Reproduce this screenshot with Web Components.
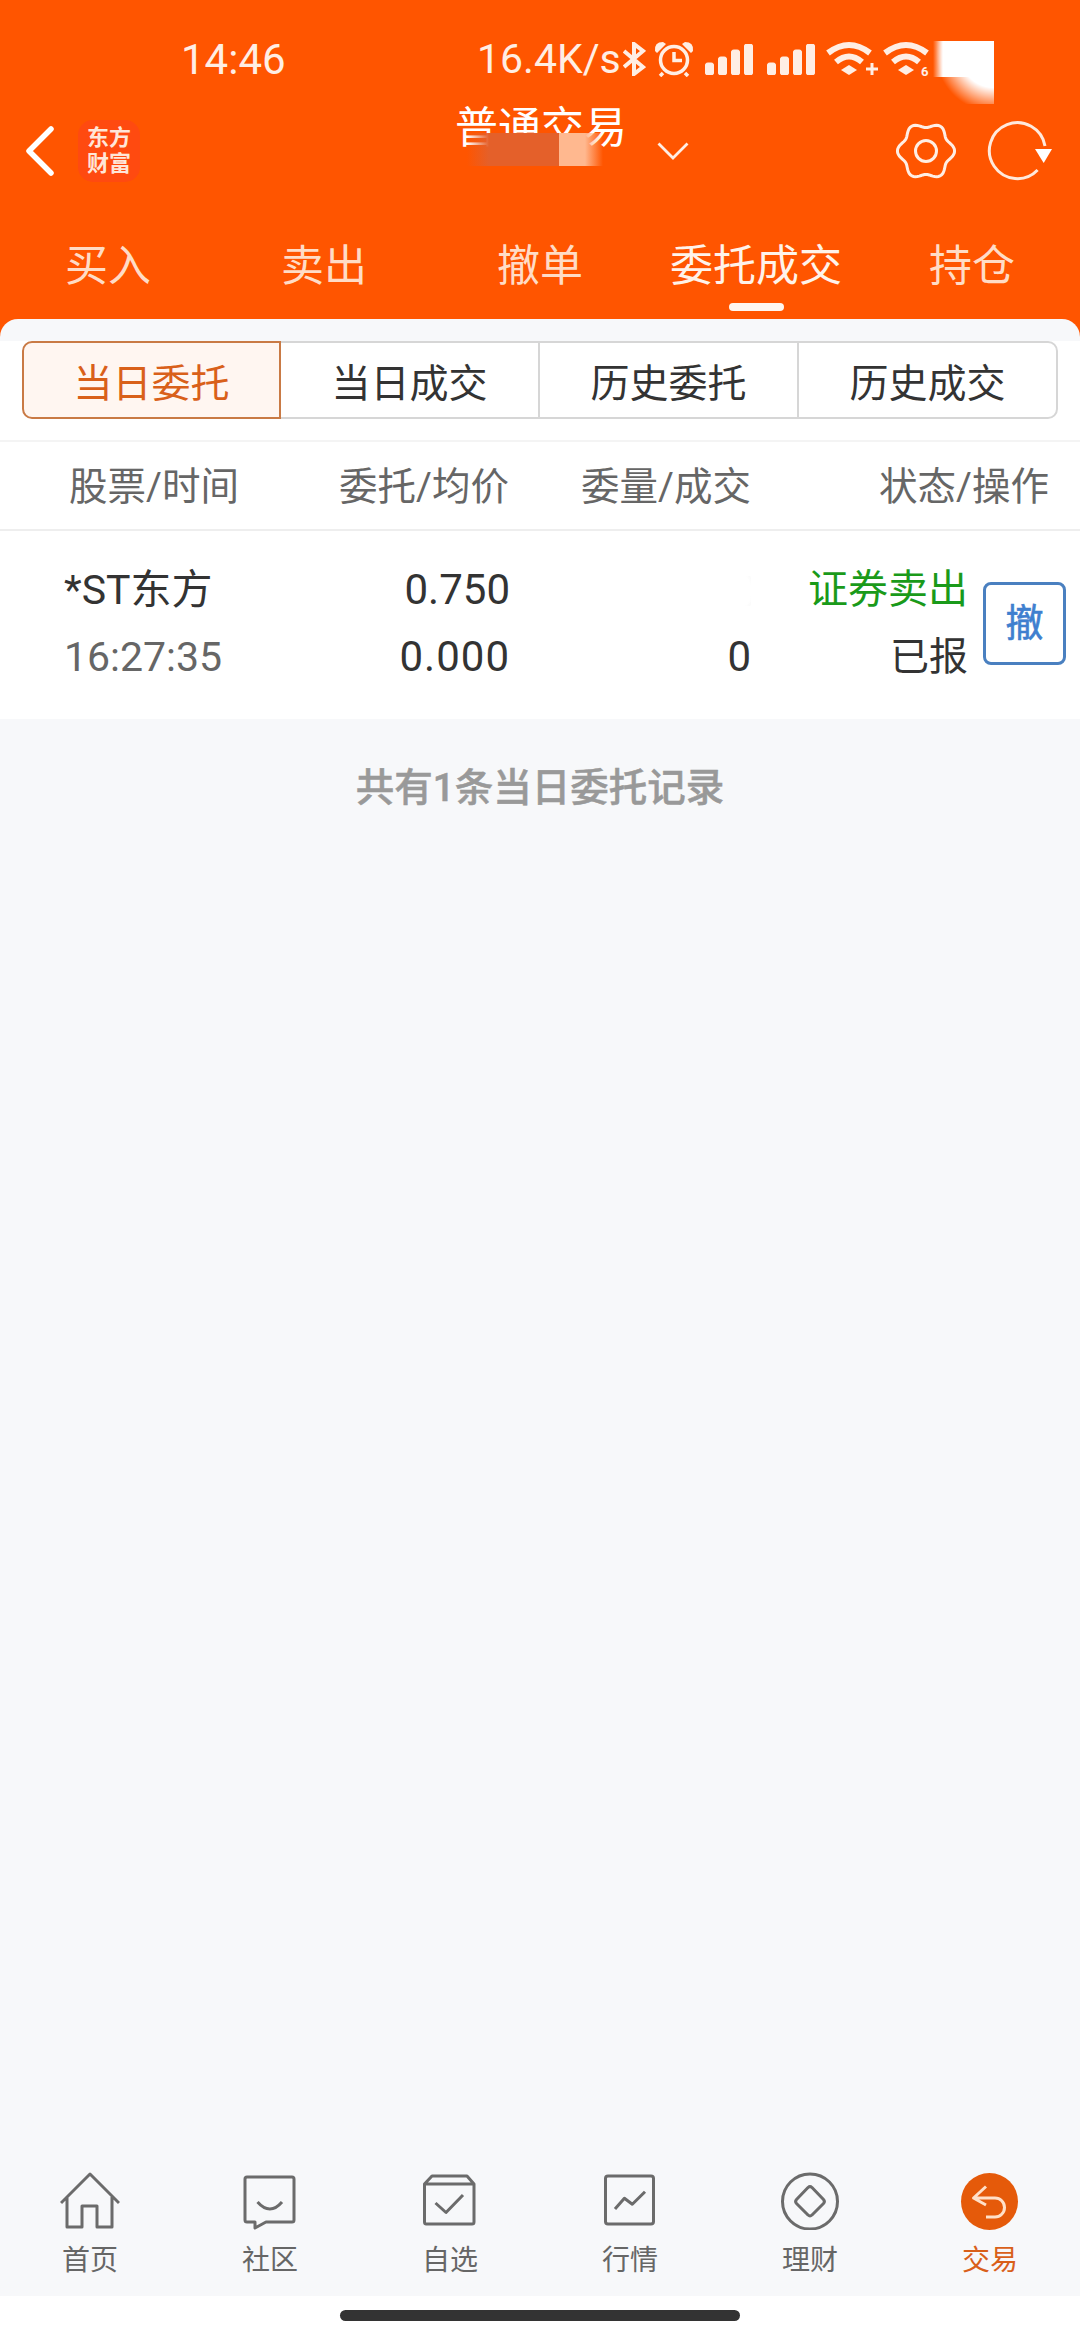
<!DOCTYPE html>
<html lang="zh-CN">
<head>
<meta charset="utf-8">
<title>普通交易</title>
<style>
    html, body { margin: 0; padding: 0; }
    body {
        width: 1080px;
        height: 2340px;
        overflow: hidden;
        font-family: Roboto, "Noto Sans CJK SC", sans-serif;
    }
    dock-item svg { display: block; width: 60px; height: 60px; fill: none; stroke: #6b6b6b; stroke-width: 3; stroke-linejoin: round; }
</style>
</head>
<body>
<trade-app>
    <status-bar></status-bar>
    <trade-header></trade-header>
    <nav-tabs>
        <nav-tab>买入</nav-tab>
        <nav-tab>卖出</nav-tab>
        <nav-tab>撤单</nav-tab>
        <nav-tab active>委托成交</nav-tab>
        <nav-tab>持仓</nav-tab>
    </nav-tabs>
    <order-panel>
        <seg-tabs>
            <seg-tab active>当日委托</seg-tab>
            <seg-tab>当日成交</seg-tab>
            <seg-tab>历史委托</seg-tab>
            <seg-tab>历史成交</seg-tab>
        </seg-tabs>
        <order-head></order-head>
        <order-row>
            <span slot="name">*ST东方</span>
            <span slot="price">0.750</span>
            <span slot="side">证券卖出</span>
            <span slot="time">16:27:35</span>
            <span slot="avg">0.000</span>
            <span slot="filled">0</span>
            <span slot="state">已报</span>
            <span slot="action">撤</span>
        </order-row>
        <span slot="note">共有1条当日委托记录</span>
    </order-panel>
    <dock-bar>
        <dock-item label="首页">
            <svg viewBox="0 0 60 60"><path d="M1 33 30 4 59 33M7 27V57H22V36H37V57H52V27"/></svg>
        </dock-item>
        <dock-item label="社区">
            <svg viewBox="0 0 60 60"><path d="M7 7H52a2 2 0 0 1 2 2V50a2 2 0 0 1-2 2H26L15 58V52H7a2 2 0 0 1-2-2V9a2 2 0 0 1 2-2Z"/><path d="M17.5 32Q30 46 42 32"/></svg>
        </dock-item>
        <dock-item label="自选">
            <svg viewBox="0 0 60 60"><path d="M6 54H52a2 2 0 0 0 2-2V14L47 6H12L4.500 14V52a2 2 0 0 0 2 2ZM4.500 14H54M15.500 33 26 42.500 43 25"/></svg>
        </dock-item>
        <dock-item label="行情">
            <svg viewBox="0 0 60 60"><rect x="5.500" y="6" width="48" height="48" rx="2.500"/><path d="M15 39 24.400 28.300 32.300 34.300 45 21.700"/></svg>
        </dock-item>
        <dock-item label="理财">
            <svg viewBox="0 0 60 60"><circle cx="30" cy="31.500" r="27.500"/><path d="M28 17.500a3 3 0 0 1 4 0L43.500 29.500a3 3 0 0 1 0 4L32 45a3 3 0 0 1-4 0L16.500 33.500a3 3 0 0 1 0-4Z"/></svg>
        </dock-item>
        <dock-item label="交易" active>
            <svg viewBox="0 0 60 60"><circle cx="29.500" cy="31.500" r="28.500" fill="#e55a0a" stroke="none"/><path d="M26 16.500 13.500 28 26 35M13.500 28H35a9.500 9.500 0 0 1 0 19H26" stroke="#ffe0c8"/></svg>
        </dock-item>
    </dock-bar>
    <home-bar></home-bar>
</trade-app>

<script>
class TradeApp extends HTMLElement {
    constructor() {
        super();
        this.attachShadow({ mode: 'open' });
        this.shadowRoot.innerHTML = `
        <style>
            :host {
                display: flex;
                flex-direction: column;
                width: 1080px;
                height: 2340px;
                background: #ff5500;
            }
        </style>
        <slot></slot>`;
    }
}

class StatusBar extends HTMLElement {
    constructor() {
        super();
        this.attachShadow({ mode: 'open' });
        const bars = `<path d="M0 21a2 2 0 0 1 2-2h4a2 2 0 0 1 2 2v8a2 2 0 0 1-2 2H2a2 2 0 0 1-2-2ZM13 15a2 2 0 0 1 2-2h4a2 2 0 0 1 2 2v14a2 2 0 0 1-2 2h-4a2 2 0 0 1-2-2ZM26 8a2 2 0 0 1 2-2h4a2 2 0 0 1 2 2v21a2 2 0 0 1-2 2h-4a2 2 0 0 1-2-2ZM39 2a2 2 0 0 1 2-2h4a2 2 0 0 1 2 2v27a2 2 0 0 1-2 2h-4a2 2 0 0 1-2-2Z"/>`;
        const wifi = `<path d="M2 12Q23-4 44 12" fill="none" stroke-width="6"/><path d="M10 21Q23 10 36 21" fill="none" stroke-width="6"/><path d="M23 24 31 29 23 34 15 29Z" stroke="none"/>`;
        this.shadowRoot.innerHTML = `
        <style>
            :host {
                display: flex;
                align-items: center;
                height: 100px;
                padding: 18px 0 0 181px;
                box-sizing: border-box;
                color: #ffeee4;
                font-size: 42px;
                position: relative;
            }
            .time { width: 103px; }
            .speed { margin-left: 193px; font-size: 41px; width: 146px; white-space: nowrap; }
            svg { display: block; flex: none; fill: #ffeee4; stroke: #ffeee4; }
            .blob {
                position: absolute;
                left: 933px;
                top: 41px;
                width: 61px;
                height: 63px;
                background:
                    radial-gradient(circle at 100% 20%, #fff 0 34px, rgba(255,255,255,0) 58px),
                    linear-gradient(90deg, rgba(255,255,255,0) 0, #fff 10px) top left / 100% 36px no-repeat;
            }
            .six { font-size: 13px; font-weight: 700; position: absolute; left: 921px; top: 65px; line-height: 13px; }
        </style>
        <span class="time">14:46</span>
        <span class="speed">16.4K/s</span>
        <svg width="23" height="34" viewBox="0 0 23 34" fill="none"><path d="M1 9 20 25 11 32V2L20 9 1 25" fill="none" stroke-width="4"/></svg>
        <svg width="40" height="36" viewBox="0 0 40 36" style="margin-left:8px"><g fill="none" stroke-width="3.500"><circle cx="20" cy="19" r="13.500"/><path d="M20 11V19.500H28M9 32 6 35M31 32 34 35" /></g><path d="M1 10Q0 1 9 1L12 3 3 12ZM39 10Q40 1 31 1L28 3 37 12Z" stroke="none"/></svg>
        <svg width="48" height="31" viewBox="0 0 47 31" style="margin-left:11px;margin-top:1px" stroke="none">${bars}</svg>
        <svg width="48" height="31" viewBox="0 0 47 31" style="margin-left:14px;margin-top:1px" stroke="none">${bars}</svg>
        <svg width="52" height="36" viewBox="0 0 52 36" style="margin-left:11px">${wifi}<path d="M40 28H52M46 22V34" stroke-width="3"/></svg>
        <svg width="48" height="36" viewBox="0 0 48 36" style="margin-left:5px">${wifi}</svg>
        <span class="six">6</span>
        <div class="blob"></div>`;
    }
}

class TradeHeader extends HTMLElement {
    constructor() {
        super();
        this.attachShadow({ mode: 'open' });
        // scalloped gear outline, six lobes
        let gear = '';
        for (let i = 0; i < 96; i++) {
            const a = i / 96 * Math.PI * 2;
            const r = 26 + 2.6 * Math.cos(6 * a);
            gear += (i ? 'L' : 'M') + (30 + r * Math.cos(a)).toFixed(2) + ' ' + (30 + r * Math.sin(a)).toFixed(2);
        }
        this.shadowRoot.innerHTML = `
        <style>
            :host {
                display: grid;
                grid-template-columns: 455px 170px 1fr;
                height: 125px;
                color: #fff;
            }
            .left { display: flex; align-items: center; height: 102px; padding-left: 25px; }
            .logo {
                width: 62px;
                height: 62px;
                margin-left: 23px;
                border-radius: 15px;
                background: #ff4a10;
                font: 700 22px/26px "Liberation Serif", "Noto Sans CJK SC", serif;
                color: #ffe6d8;
                display: flex;
                flex-direction: column;
                align-items: center;
                justify-content: center;
            }
            .title {
                position: relative;
                font-size: 43px;
                line-height: 54px;
                height: 54px;
                margin-top: 1px;
                white-space: nowrap;
                color: #fff;
            }
            .smudge {
                position: absolute;
                left: 12px;
                top: 32px;
                width: 136px;
                height: 33px;
                background:
                    linear-gradient(90deg, rgba(228,96,42,0) 0, #e4602a 22px, #e4602a 92px, #ffb88f 92px, #ffb88f 118px, rgba(255,184,143,0) 136px);
            }
            .right { display: flex; align-items: center; height: 102px; padding-left: 32px; }
            .gear { margin-left: 207px; }
            .refresh { margin-left: 29px; }
            svg { display: block; flex: none; fill: none; }
        </style>
        <div class="left">
            <svg width="30" height="50" viewBox="0 0 30 50"><path d="M26 3 4 25 26 47" stroke="#fff" stroke-width="5.500" stroke-linecap="round" stroke-linejoin="round"/></svg>
            <div class="logo"><span>东方</span><span>财富</span></div>
        </div>
        <div class="title">普通交易<div class="smudge"></div></div>
        <div class="right">
            <svg width="32" height="18" viewBox="0 0 32 18"><path d="M1.500 1.500 16 16 30.500 1.500" stroke="#ffeee4" stroke-width="2.800"/></svg>
            <svg class="gear" width="60" height="60" viewBox="0 0 60 60" stroke="#ffeee4" stroke-width="3"><path d="${gear}Z"/><circle cx="30" cy="30" r="10.500"/></svg>
            <svg class="refresh" width="70" height="65" viewBox="0 0 70 65"><path d="M52.600 51A28 28 0 1 1 60 27" stroke="#ffe9dc" stroke-width="3"/><path d="M50 30H67L58.700 44Z" fill="#fff"/></svg>
        </div>`;
    }
}

class NavTabs extends HTMLElement {
    constructor() {
        super();
        this.attachShadow({ mode: 'open' });
        this.shadowRoot.innerHTML = `
        <style>
            :host {
                display: grid;
                grid-template-columns: repeat(5, 216px);
                height: 83px;
                padding-top: 11px;
            }
        </style>
        <slot></slot>`;
    }
}

class NavTab extends HTMLElement {
    constructor() {
        super();
        this.attachShadow({ mode: 'open' });
        this.shadowRoot.innerHTML = `
        <style>
            :host {
                display: flex;
                flex-direction: column;
                align-items: center;
                color: #ffdcc6;
                font-size: 43px;
                line-height: 60px;
            }
            :host([active]) { color: #fff3ea; }
            .bar { display: none; width: 55px; height: 8px; margin-top: 7px; border-radius: 4px; background: #fff6ef; }
            :host([active]) .bar { display: block; }
        </style>
        <slot></slot>
        <div class="bar"></div>`;
    }
}

class OrderPanel extends HTMLElement {
    constructor() {
        super();
        this.attachShadow({ mode: 'open' });
        this.shadowRoot.innerHTML = `
        <style>
            :host {
                display: block;
                flex: 1;
                border-radius: 18px 18px 0 0;
                background: #f7f8fa;
                overflow: hidden;
            }
            .white { background: #fff; }
            .note {
                text-align: center;
                color: #999;
                font-size: 38.500px;
                font-weight: 500;
                line-height: 50px;
                padding-top: 44px;
                -webkit-text-stroke: 0.5px #999;
            }
        </style>
        <div class="white"><slot></slot></div>
        <div class="note"><slot name="note"></slot></div>`;
    }
}

class SegTabs extends HTMLElement {
    constructor() {
        super();
        this.attachShadow({ mode: 'open' });
        this.shadowRoot.innerHTML = `
        <style>
            :host {
                display: grid;
                grid-template-columns: repeat(4, 259px);
                height: 78px;
                margin: 22px 22px 21px;
            }
        </style>
        <slot></slot>`;
    }
}

class SegTab extends HTMLElement {
    constructor() {
        super();
        this.attachShadow({ mode: 'open' });
        this.shadowRoot.innerHTML = `
        <style>
            :host {
                display: flex;
                align-items: center;
                justify-content: center;
                box-sizing: border-box;
                border: 2px solid #d6d6d6;
                margin-left: -2px;
                background: #fff;
                color: #333;
                font-size: 39px;
            }
            :host(:first-child) { margin-left: 0; border-radius: 10px 0 0 10px; }
            :host(:last-child) { border-radius: 0 10px 10px 0; }
            :host([active]) {
                position: relative;
                border-color: #c97a45;
                background: #fff6f1;
                color: #d9601a;
            }
        </style>
        <slot></slot>`;
    }
}

class OrderHead extends HTMLElement {
    constructor() {
        super();
        this.attachShadow({ mode: 'open' });
        this.shadowRoot.innerHTML = `
        <style>
            :host {
                display: grid;
                grid-template-columns: 240px 200px 242px 298px;
                align-items: center;
                height: 82px;
                padding: 0 30px 5px 69px;
                border-top: 2px solid #f4f4f4;
                border-bottom: 2px solid #eee;
                color: #666;
                font-size: 38.500px;
            }
            .r { text-align: right; white-space: nowrap; }
        </style>
        <span>股票/时间</span>
        <span class="r">委托/均价</span>
        <span class="r">委量/成交</span>
        <span class="r">状态/操作</span>`;
    }
}

class OrderRow extends HTMLElement {
    constructor() {
        super();
        this.attachShadow({ mode: 'open' });
        this.shadowRoot.innerHTML = `
        <style>
            :host {
                display: grid;
                grid-template-columns: 246px 200px 242px 216px 83px;
                grid-template-rows: 67px 67px;
                align-items: center;
                height: 188px;
                box-sizing: border-box;
                padding: 25px 0 0 64px;
                color: #333;
                font-size: 41px;
                line-height: 50px;
                position: relative;
            }
            .r { text-align: right; }
            .time { color: #666; }
            .num { font-size: 42px; }
            .wide { font-size: 42px; letter-spacing: 1px; }
            .side { color: #1a9a1a; font-size: 40px; }
            .state { font-size: 39px; }
            .action {
                grid-column: 5;
                grid-row: 1 / 3;
                justify-self: start;
                margin-left: 15px;
                width: 83px;
                height: 83px;
                box-sizing: border-box;
                border: 3px solid #4a80c0;
                border-radius: 8px;
                display: flex;
                align-items: center;
                justify-content: center;
                color: #3f7fcf;
                font-size: 38px;
                -webkit-text-stroke: 0.6px #3f7fcf;
            }
            .smudge {
                position: absolute;
                left: 743px;
                top: 45px;
                width: 8px;
                height: 30px;
                background: radial-gradient(ellipse at 0 50%, #fff 70%, #fbfbfb 90%, #fff 100%);
            }
        </style>
        <div><slot name="name"></slot></div>
        <div class="r num"><slot name="price"></slot></div>
        <div></div>
        <div class="r side"><slot name="side"></slot></div>
        <div class="action"><slot name="action"></slot></div>
        <div class="time"><slot name="time"></slot></div>
        <div class="r wide"><slot name="avg"></slot></div>
        <div class="r wide"><slot name="filled"></slot></div>
        <div class="r state"><slot name="state"></slot></div>
        <div class="smudge"></div>`;
    }
}

class DockBar extends HTMLElement {
    constructor() {
        super();
        this.attachShadow({ mode: 'open' });
        this.shadowRoot.innerHTML = `
        <style>
            :host {
                display: grid;
                grid-template-columns: repeat(6, 180px);
                height: 136px;
                box-sizing: border-box;
                padding-top: 10px;
                background: #f7f8fa;
            }
        </style>
        <slot></slot>`;
    }
}

class DockItem extends HTMLElement {
    constructor() {
        super();
        this.attachShadow({ mode: 'open' });
        this.shadowRoot.innerHTML = `
        <style>
            :host {
                display: flex;
                flex-direction: column;
                align-items: center;
                color: #666;
                font-size: 28px;
                line-height: 36px;
            }
            :host([active]) { color: #d9601a; }
            .label { margin-top: 13px; }
        </style>
        <slot></slot>
        <div class="label">${this.getAttribute('label') || ''}</div>`;
    }
}

class HomeBar extends HTMLElement {
    constructor() {
        super();
        this.attachShadow({ mode: 'open' });
        this.shadowRoot.innerHTML = `
        <style>
            :host {
                display: flex;
                justify-content: center;
                height: 44px;
                box-sizing: border-box;
                padding-top: 14px;
                background: #fff;
            }
            div { width: 400px; height: 11px; border-radius: 6px; background: #333; }
        </style>
        <div></div>`;
    }
}

customElements.define('trade-app', TradeApp);
customElements.define('status-bar', StatusBar);
customElements.define('trade-header', TradeHeader);
customElements.define('nav-tabs', NavTabs);
customElements.define('nav-tab', NavTab);
customElements.define('order-panel', OrderPanel);
customElements.define('seg-tabs', SegTabs);
customElements.define('seg-tab', SegTab);
customElements.define('order-head', OrderHead);
customElements.define('order-row', OrderRow);
customElements.define('dock-bar', DockBar);
customElements.define('dock-item', DockItem);
customElements.define('home-bar', HomeBar);
</script>
</body>
</html>
